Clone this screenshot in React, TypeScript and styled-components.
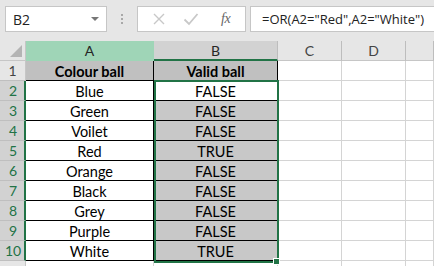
import React from 'react';
import styled, { createGlobalStyle } from 'styled-components';

const Global = createGlobalStyle`
  html, body { margin: 0; padding: 0; background: #ffffff; overflow: hidden; }
  #root { width: 434px; height: 266px; }
`;

const Page = styled.div`
  width: 434px;
  height: 266px;
  overflow: hidden;
  background: #ffffff;
  display: flex;
  flex-direction: column;
  font-family: Lato, "Liberation Sans", sans-serif;
`;

const Toolbar = styled.div`
  height: 41px;
  flex: none;
  box-sizing: border-box;
  background: #e6e6e6;
  display: flex;
  align-items: flex-start;
  padding: 6px 0 0 5px;
`;

const NameBox = styled.div`
  width: 102px;
  height: 26px;
  box-sizing: border-box;
  background: #ffffff;
  border: 1px solid #c6c6c6;
  display: flex;
  align-items: center;
  justify-content: space-between;
  padding: 0 7px 0 7px;
  font-family: "Open Sans", "Noto Sans", sans-serif;
  font-size: 14px;
  color: #222;
`;

const DropArrow = styled.span`
  width: 0;
  height: 0;
  border-left: 4px solid transparent;
  border-right: 4px solid transparent;
  border-top: 4px solid #777;
`;

const Grip = styled.div`
  width: 30px;
  height: 26px;
  display: flex;
  flex-direction: column;
  align-items: center;
  justify-content: center;
  gap: 2px;
`;

const GripDot = styled.span`
  width: 2px;
  height: 2px;
  background: #a8a8a8;
`;

const IconBox = styled.div`
  width: 109px;
  height: 26px;
  box-sizing: border-box;
  background: #ffffff;
  border: 1px solid #c6c6c6;
  display: flex;
  align-items: center;
  padding: 0 0 0 14px;
`;

const IconSlot = styled.div`
  width: 34px;
  height: 24px;
  display: flex;
  align-items: center;
  justify-content: flex-start;
`;

const Fx = styled.span`
  font-family: "Liberation Serif", serif;
  font-style: italic;
  font-size: 14px;
  color: #666;
  letter-spacing: -0.5px;
  margin-left: 7px;
`;

const FormulaBox = styled.div`
  flex: 1;
  margin-left: 4px;
  height: 26px;
  box-sizing: border-box;
  background: #ffffff;
  border: 1px solid #c6c6c6;
  border-right: none;
  display: flex;
  align-items: center;
  padding-left: 11px;
  font-family: "Open Sans", "Noto Sans", sans-serif;
  font-size: 13px;
  color: #222;
  white-space: nowrap;
  overflow: hidden;
`;

const Sheet = styled.div`
  position: relative;
  flex: 1;
  display: grid;
  grid-template-columns: 26px 128px 124px 64px 64px 1fr;
  grid-auto-rows: 20px;
  background: #ffffff;
`;

const Corner = styled.div`
  box-sizing: border-box;
  background: #e6e6e6;
  border-right: 1px solid #c6c6c6;
  border-bottom: 1px solid #c6c6c6;
  position: relative;
`;

const CornerTri = styled.span`
  position: absolute;
  right: 3px;
  bottom: 3px;
  width: 0;
  height: 0;
  border-left: 12px solid transparent;
  border-bottom: 12px solid #b4b4b4;
`;

type HeadKind = 'green' | 'selected' | 'normal';

const ColHead = styled.div<{ $kind: HeadKind }>`
  box-sizing: border-box;
  display: flex;
  align-items: center;
  justify-content: center;
  font-family: Lato, "Liberation Sans", sans-serif;
  font-size: 14px;
  color: ${(p) => (p.$kind === 'normal' ? '#444' : '#262626')};
  background: ${(p) =>
    p.$kind === 'green' ? '#9fd5b7' : p.$kind === 'selected' ? '#d2d2d2' : '#e6e6e6'};
  border-right: 1px solid ${(p) => (p.$kind === 'green' ? '#9fd5b7' : '#bdbdbd')};
  border-bottom: ${(p) =>
    p.$kind === 'selected' ? '2px solid #217346' : p.$kind === 'green' ? '1px solid #9fd5b7' : '1px solid #c6c6c6'};
  padding-top: ${(p) => (p.$kind === 'selected' ? '1px' : '0')};
`;

const RowHead = styled.div<{ $selected: boolean }>`
  box-sizing: border-box;
  display: flex;
  align-items: center;
  justify-content: center;
  font-family: Lato, "Liberation Sans", sans-serif;
  font-size: 14px;
  color: ${(p) => (p.$selected ? '#217346' : '#444')};
  background: ${(p) => (p.$selected ? '#d2d2d2' : '#e6e6e6')};
  border-bottom: 1px solid #bfbfbf;
  border-right: ${(p) => (p.$selected ? '2px solid #217346' : '1px solid #c6c6c6')};
  padding-left: ${(p) => (p.$selected ? '2px' : '0')};
`;

const Cell = styled.div<{ $table?: boolean; $head?: boolean; $fill?: boolean }>`
  box-sizing: border-box;
  display: flex;
  align-items: center;
  justify-content: center;
  font-family: Lato, "Liberation Sans", sans-serif;
  font-size: 14.5px;
  font-weight: ${(p) => (p.$head ? 700 : 400)};
  color: #000;
  background: ${(p) => (p.$head ? '#c0c0c0' : p.$fill ? '#c8c8c8' : '#ffffff')};
  border-right: 1px solid ${(p) => (p.$table ? '#000' : '#d4d4d4')};
  border-bottom: 1px solid ${(p) => (p.$table ? '#000' : '#d4d4d4')};
  padding-top: 1px;
`;

const Selection = styled.div`
  position: absolute;
  left: 154px;
  top: 39px;
  width: 125px;
  height: 183px;
  box-sizing: border-box;
  border: 2px solid #217346;
  pointer-events: none;
`;

const FillHandle = styled.div`
  position: absolute;
  left: 273px;
  top: 217px;
  width: 7px;
  height: 7px;
  box-sizing: border-box;
  background: #217346;
  border: 1px solid #ffffff;
`;

const rows: [string, string][] = [
  ['Blue', 'FALSE'],
  ['Green', 'FALSE'],
  ['Voilet', 'FALSE'],
  ['Red', 'TRUE'],
  ['Orange', 'FALSE'],
  ['Black', 'FALSE'],
  ['Grey', 'FALSE'],
  ['Purple', 'FALSE'],
  ['White', 'TRUE'],
];

const XIcon = () => (
  <svg width="14" height="14" viewBox="0 0 14 14">
    <path d="M2 2 L12 12 M12 2 L2 12" stroke="#c8c8c8" strokeWidth="1.4" fill="none" />
  </svg>
);

const CheckIcon = () => (
  <svg width="16" height="14" viewBox="0 0 16 14">
    <path d="M1.5 7.5 L6 12 L14.5 2" stroke="#c8c8c8" strokeWidth="1.8" fill="none" />
  </svg>
);

export default function App() {
  return (
    <Page>
      <Global />
      <Toolbar>
        <NameBox>
          <span>B2</span>
          <DropArrow />
        </NameBox>
        <Grip>
          <GripDot />
          <GripDot />
          <GripDot />
        </Grip>
        <IconBox>
          <IconSlot>
            <XIcon />
          </IconSlot>
          <IconSlot>
            <CheckIcon />
          </IconSlot>
          <IconSlot>
            <Fx>fx</Fx>
          </IconSlot>
        </IconBox>
        <FormulaBox>=OR(A2="Red",A2="White")</FormulaBox>
      </Toolbar>
      <Sheet>
        <Corner>
          <CornerTri />
        </Corner>
        <ColHead $kind="green">A</ColHead>
        <ColHead $kind="selected">B</ColHead>
        <ColHead $kind="normal">C</ColHead>
        <ColHead $kind="normal">D</ColHead>
        <ColHead $kind="normal" />

        <RowHead $selected={false}>1</RowHead>
        <Cell $table $head>Colour ball</Cell>
        <Cell $table $head>Valid ball</Cell>
        <Cell />
        <Cell />
        <Cell />

        {rows.map(([a, b], i) => (
          <React.Fragment key={a}>
            <RowHead $selected>{i + 2}</RowHead>
            <Cell $table>{a}</Cell>
            <Cell $table $fill={i > 0}>{b}</Cell>
            <Cell />
            <Cell />
            <Cell />
          </React.Fragment>
        ))}

        <RowHead $selected={false} />
        <Cell />
        <Cell />
        <Cell />
        <Cell />
        <Cell />

        <Selection />
        <FillHandle />
      </Sheet>
    </Page>
  );
}
